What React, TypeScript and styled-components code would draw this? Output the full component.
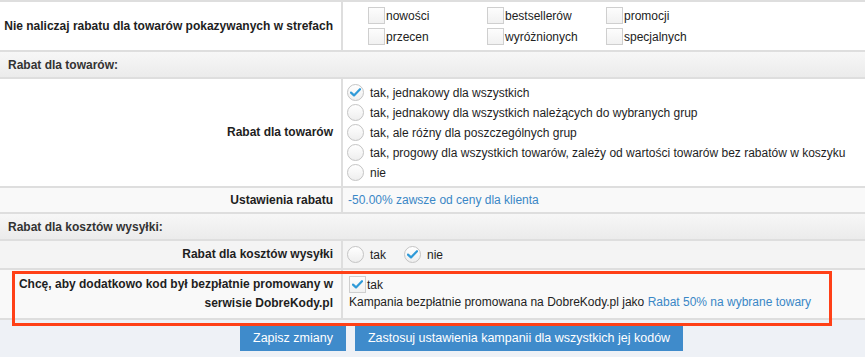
import React from 'react';
import styled, { createGlobalStyle } from 'styled-components';

const GlobalStyle = createGlobalStyle`
  html, body {
    margin: 0;
    padding: 0;
    background: #eef1f6;
    font-family: "Liberation Sans", Arial, sans-serif;
    font-size: 12px;
    color: #222;
  }
`

const Page = styled('div')`
  position: relative;
  width: 865px;
  height: 357px;
  overflow: hidden;
  background: #eef1f6;
`

const Form = styled('div')`
  border-top: 2px solid #dedede;
`

const Row = styled('div')<{ $bg?: string; $height: number }>`
  display: grid;
  grid-template-columns: 343px 1fr;
  min-height: ${p => p.$height}px;
  background: ${p => p.$bg || '#fff'};
  border-bottom: 2px solid #dedede;
`

const Label = styled('div')`
  display: flex;
  align-items: center;
  justify-content: flex-end;
  text-align: right;
  padding: 0 8px 0 0;
  font-weight: bold;
  line-height: 19px;
  color: #1e1e1e;
  border-right: 2px solid #dedede;
`

const Field = styled('div')<{ $padLeft?: number }>`
  display: flex;
  flex-direction: column;
  justify-content: center;
  padding: 0 6px 0 ${p => p.$padLeft ?? 5}px;
`

const SectionHeader = styled('div')`
  height: 25px;
  display: flex;
  align-items: center;
  padding-left: 8px;
  font-weight: bold;
  color: #333;
  background: linear-gradient(#f7f7f7, #ebebeb);
  border-bottom: 2px solid #dedede;
`

const ZoneGrid = styled('div')`
  display: grid;
  grid-template-columns: repeat(3, 119px);
  row-gap: 5px;
  padding-left: 20px;
`

const Check = styled('label')`
  display: flex;
  align-items: center;
  height: 16px;
  color: #222;
`

const Box = styled('span')`
  width: 15px;
  height: 15px;
  border: 1px solid #cfcfcf;
  background: linear-gradient(#fdfdfd, #f1f1f1);
  margin-right: 1px;
  display: flex;
  align-items: center;
  justify-content: center;
`

const RadioList = styled('div')`
  display: flex;
  flex-direction: column;
`

const RadioLine = styled('label')<{ $spaced?: boolean }>`
  display: flex;
  align-items: center;
  height: 20px;
  margin-right: ${p => (p.$spaced ? 18 : 0)}px;
  color: #1e1e1e;
  white-space: nowrap;
`

const Circle = styled('span')`
  width: 15px;
  height: 15px;
  border-radius: 50%;
  border: 1px solid #c4c4c4;
  background: linear-gradient(#ffffff, #eeeeee);
  margin-right: 6px;
  display: flex;
  align-items: center;
  justify-content: center;
`

const Inline = styled('div')`
  display: flex;
  align-items: center;
`

const Link = styled('span')`
  color: #3a87c6;
`

const PromoText = styled('div')`
  line-height: 19px;
`

const Highlight = styled('div')`
  position: absolute;
  left: 12px;
  top: 271px;
  width: 814px;
  height: 49px;
  border: 3px solid #ff4017;
  pointer-events: none;
`

const Footer = styled('div')`
  display: flex;
  gap: 9px;
  padding: 5px 0 0 240px;
`

const Button = styled('button')`
  height: 26px;
  padding: 0 13px;
  border: none;
  background: #3f8bcb;
  color: #fff;
  font-family: "Liberation Sans", Arial, sans-serif;
  font-size: 12.5px;
`

const Tick = () => (
  <svg width="11" height="9" viewBox="0 0 11 9">
    <path d="M1 4.6 L4 7.4 L10 1.2" fill="none" stroke="#2f9ad8" strokeWidth="2.2" strokeLinecap="round" strokeLinejoin="round" />
  </svg>
)

const CheckBox = ({ label, checked }: { label: string; checked?: boolean }) => (
  <Check>
    <Box>{checked && <Tick />}</Box>
    {label}
  </Check>
)

const Radio = ({ label, checked, spaced }: { label: string; checked?: boolean; spaced?: boolean }) => (
  <RadioLine $spaced={spaced}>
    <Circle>{checked && <Tick />}</Circle>
    {label}
  </RadioLine>
)

const zones = ['nowości', 'bestsellerów', 'promocji', 'przecen', 'wyróżnionych', 'specjalnych']

const discountOptions = [
  'tak, jednakowy dla wszystkich',
  'tak, jednakowy dla wszystkich należących do wybranych grup',
  'tak, ale różny dla poszczególnych grup',
  'tak, progowy dla wszystkich towarów, zależy od wartości towarów bez rabatów w koszyku',
  'nie',
]

function App() {
  return (
    <Page>
      <GlobalStyle />
      <Form>
        <Row $height={48}>
          <Label>Nie naliczaj rabatu dla towarów pokazywanych w strefach</Label>
          <Field>
            <ZoneGrid>
              {zones.map(z => <CheckBox key={z} label={z} />)}
            </ZoneGrid>
          </Field>
        </Row>
        <SectionHeader>Rabat dla towarów:</SectionHeader>
        <Row $height={107}>
          <Label>Rabat dla towarów</Label>
          <Field $padLeft={4}>
            <RadioList>
              {discountOptions.map((o, i) => <Radio key={o} label={o} checked={i === 0} />)}
            </RadioList>
          </Field>
        </Row>
        <Row $height={24} $bg="#f9f9f9">
          <Label>Ustawienia rabatu</Label>
          <Field $padLeft={5}>
            <Link>-50.00% zawsze od ceny dla klienta</Link>
          </Field>
        </Row>
        <SectionHeader>Rabat dla kosztów wysyłki:</SectionHeader>
        <Row $height={27} $bg="#f4f4f4">
          <Label>Rabat dla kosztów wysyłki</Label>
          <Field $padLeft={4}>
            <Inline>
              <Radio label="tak" spaced />
              <Radio label="nie" checked />
            </Inline>
          </Field>
        </Row>
        <Row $height={48} $bg="#f9f9f9">
          <Label>Chcę, aby dodatkowo kod był bezpłatnie promowany w<br />serwisie DobreKody.pl</Label>
          <Field $padLeft={6}>
            <CheckBox label="tak" checked />
            <PromoText>
              Kampania bezpłatnie promowana na DobreKody.pl jako <Link>Rabat 50% na wybrane towary</Link>
            </PromoText>
          </Field>
        </Row>
      </Form>
      <Footer>
        <Button>Zapisz zmiany</Button>
        <Button>Zastosuj ustawienia kampanii dla wszystkich jej kodów</Button>
      </Footer>
      <Highlight />
    </Page>
  );
}

export default App;
